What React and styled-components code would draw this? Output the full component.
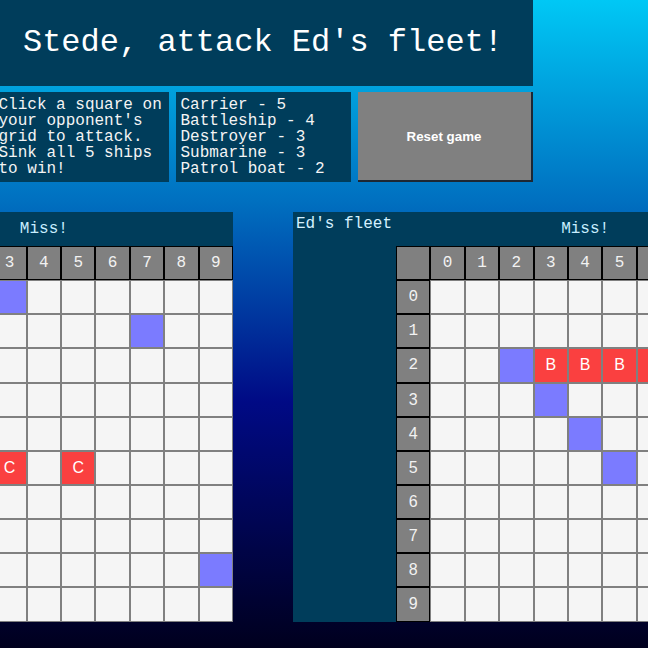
import React from "react";
import styled, { createGlobalStyle } from "styled-components";

const GlobalStyle = createGlobalStyle`
  html {
    min-height: 100%;
    background: linear-gradient(to bottom, #00c8f5 0%, #0070c0 31%, #000a85 62%, #00001e 100%);
  }
  body {
    margin: 0;
    font-family: "Liberation Mono", monospace;
  }
`;

const Page = styled.div`
  width: 526px;
  display: flex;
  flex-direction: column;
  align-items: center;
`;

const Title = styled.h1`
  margin: 0;
  width: 540px;
  flex-shrink: 0;
  box-sizing: border-box;
  padding: 25px 0;
  background: #003d5b;
  color: #ffffff;
  font-family: "Liberation Mono", monospace;
  font-weight: normal;
  font-size: 32px;
  line-height: 36px;
  text-align: center;
  white-space: nowrap;
`;

const InfoRow = styled.div`
  margin-top: 6px;
  display: grid;
  grid-template-columns: repeat(3, 175px);
  column-gap: 7px;
  flex-shrink: 0;
`;

const InfoBox = styled.div`
  box-sizing: border-box;
  height: 90px;
  padding: 5px;
  background: #003d5b;
  color: #f4f4f4;
  font-size: 16px;
  line-height: 16px;
  white-space: pre;
`;

const ResetButton = styled.button`
  box-sizing: border-box;
  height: 90px;
  width: 175px;
  border: none;
  border-right: 2px solid #1d2733;
  border-bottom: 2px solid #1d2733;
  background: #808080;
  color: #ffffff;
  font-family: "Liberation Sans", Arial, sans-serif;
  font-weight: bold;
  font-size: 13.33px;
  cursor: pointer;
`;

const BoardsRow = styled.div`
  margin-top: 30px;
  display: flex;
  gap: 60px;
  flex-shrink: 0;
`;

const Board = styled.section`
  display: flex;
  background: #003d5b;
`;

const Side = styled.div`
  width: 103px;
  box-sizing: border-box;
  padding: 3px;
  color: #d4f0ff;
  font-size: 16px;
  line-height: 18px;
`;

const Main = styled.div`
  display: flex;
  flex-direction: column;
`;

const Message = styled.div`
  height: 34px;
  display: flex;
  align-items: center;
  justify-content: center;
  color: #c8eeff;
  font-size: 16px;
`;

const Grid = styled.div`
  display: grid;
  grid-template-columns: repeat(11, 34.4px);
  grid-auto-rows: 34.15px;
`;

const HeadCell = styled.div`
  box-sizing: border-box;
  border: 1px solid #000000;
  background: #808080;
  color: #f2f2f2;
  display: flex;
  align-items: center;
  justify-content: center;
  font-family: ${(p) =>
    p.$sans ? '"Liberation Sans", Arial, sans-serif' : '"Liberation Mono", monospace'};
  font-size: 16px;
`;

const Cell = styled.div`
  box-sizing: border-box;
  border: 1px solid #808080;
  background: ${(p) =>
    p.$state === "hit" ? "#fa4040" : p.$state === "miss" ? "#7b7bff" : "#f5f5f5"};
  color: #ffffff;
  display: flex;
  align-items: center;
  justify-content: center;
  font-family: "Liberation Sans", Arial, sans-serif;
  font-size: 16px;
`;

const range = [0, 1, 2, 3, 4, 5, 6, 7, 8, 9];

const boards = [
  {
    name: "Stede's fleet",
    message: "Miss!",
    marks: {
      "0-3": { s: "miss" },
      "1-7": { s: "miss" },
      "8-9": { s: "miss" },
      "5-3": { s: "hit", l: "C" },
      "5-5": { s: "hit", l: "C" },
    },
  },
  {
    name: "Ed's fleet",
    message: "Miss!",
    marks: {
      "2-2": { s: "miss" },
      "2-3": { s: "hit", l: "B" },
      "2-4": { s: "hit", l: "B" },
      "2-5": { s: "hit", l: "B" },
      "2-6": { s: "hit", l: "B" },
      "3-3": { s: "miss" },
      "4-4": { s: "miss" },
      "5-5": { s: "miss" },
    },
  },
];

function BoardGrid({ marks }) {
  return (
    <Grid>
      <HeadCell />
      {range.map((c) => (
        <HeadCell key={"h" + c}>{c}</HeadCell>
      ))}
      {range.map((r) => (
        <React.Fragment key={"r" + r}>
          <HeadCell $sans={r >= 3}>{r}</HeadCell>
          {range.map((c) => {
            const m = marks[`${r}-${c}`];
            return (
              <Cell key={c} $state={m ? m.s : "empty"}>
                {m && m.l}
              </Cell>
            );
          })}
        </React.Fragment>
      ))}
    </Grid>
  );
}

export default function App() {
  return (
    <>
      <GlobalStyle />
      <Page>
        <Title>Stede, attack Ed's fleet!</Title>
        <InfoRow>
          <InfoBox>{"Click a square on\nyour opponent's\ngrid to attack.\nSink all 5 ships\nto win!"}</InfoBox>
          <InfoBox>{"Carrier - 5\nBattleship - 4\nDestroyer - 3\nSubmarine - 3\nPatrol boat - 2"}</InfoBox>
          <ResetButton>Reset game</ResetButton>
        </InfoRow>
        <BoardsRow>
          {boards.map((b) => (
            <Board key={b.name}>
              <Side>{b.name}</Side>
              <Main>
                <Message>{b.message}</Message>
                <BoardGrid marks={b.marks} />
              </Main>
            </Board>
          ))}
        </BoardsRow>
      </Page>
    </>
  );
}
